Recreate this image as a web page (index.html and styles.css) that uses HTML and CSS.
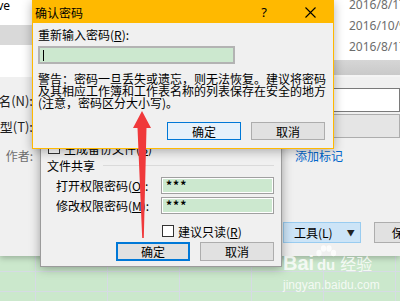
FILE: index.html
```html
<!DOCTYPE html>
<html lang="zh-CN">
<head>
    <meta charset="UTF-8">
    <title>确认密码</title>
    <link rel="stylesheet" href="styles.css">
</head>
<body>

<!-- 另存为 窗口 -->
<div class="win saveas">
    <div class="browser">
        <div class="nav">
            <div class="nav-item"><span class="cut">OneDrive</span></div>
            <div class="nav-item sel"></div>
        </div>
        <div class="files">
            <div class="list">
                <div class="date first">2016/8/17 10:21</div>
                <div class="date">2016/10/9 15:02</div>
                <div class="date">2016/8/17 10:20</div>
            </div>
            <div class="hscroll"></div>
        </div>
    </div>

    <div class="field-row name-row">
        <div class="lbl"><span>文件名(N):</span></div>
        <div class="textbox"></div>
    </div>
    <div class="field-row type-row">
        <div class="lbl"><span>保存类型(T):</span></div>
        <div class="select"></div>
    </div>
    <div class="meta-row">
        <div class="lbl muted"><span>作者:</span></div>
        <span class="link">添加标记</span>
    </div>
    <div class="action-row">
        <div class="btn tools">工具(L)<span class="caret">▼</span></div>
        <div class="btn save">保存(S)</div>
    </div>
</div>

<!-- 常规选项 -->
<div class="win general">
    <div class="check-row">
        <span class="box"></span>
        <span>生成备份文件(<u>B</u>)</span>
    </div>
    <div class="group-head">
        <span>文件共享</span>
        <span class="rule"></span>
    </div>
    <div class="pw-row">
        <span class="pw-label">打开权限密码(<u>O</u>):</span>
        <span class="pw-box">***</span>
    </div>
    <div class="pw-row second">
        <span class="pw-label">修改权限密码(<u>M</u>):</span>
        <span class="pw-box">***</span>
    </div>
    <div class="check-row readonly">
        <span class="box"></span>
        <span>建议只读(<u>R</u>)</span>
    </div>
    <div class="dlg-buttons">
        <div class="btn push default">确定</div>
        <div class="btn push">取消</div>
    </div>
</div>

<!-- 确认密码 -->
<div class="win confirm">
    <div class="titlebar">
        <span class="title">确认密码</span>
        <span class="help">?</span>
        <span class="close">
            <svg width="11" height="11" viewBox="0 0 11 11"><path d="M0.5 0.5 L10.5 10.5 M10.5 0.5 L0.5 10.5" stroke="#000" stroke-width="1.1" fill="none"/></svg>
        </span>
    </div>
    <div class="confirm-body">
        <div class="prompt">重新输入密码(<u>R</u>):</div>
        <div class="pw-input"><span class="caret-line"></span></div>
        <div class="warning">警告：密码一旦丢失或遗忘，则无法恢复。建议将密码及其相应工作簿和工作表名称的列表保存在安全的地方(注意，密码区分大小写)。</div>
        <div class="dlg-buttons confirm-buttons">
            <div class="btn push focus">确定</div>
            <div class="btn push">取消</div>
        </div>
    </div>
</div>

<svg class="arrow" width="400" height="301" viewBox="0 0 400 301">
    <polygon points="142,111 151,128 146.5,128 143.8,238 142.2,238 137.5,128 133,128" fill="#f0393b"/>
</svg>

<div class="watermark">
    <div class="wm-logo">
        <span>Bai</span>
        <span class="paw">
            <svg width="22" height="12" viewBox="0 0 22 12">
                <ellipse cx="4" cy="8" rx="2.6" ry="3.2" fill="currentColor"/>
                <ellipse cx="8.5" cy="3.5" rx="2.6" ry="3.2" fill="currentColor"/>
                <ellipse cx="14" cy="3.5" rx="2.6" ry="3.2" fill="currentColor"/>
                <ellipse cx="18.5" cy="8" rx="2.6" ry="3.2" fill="currentColor"/>
            </svg>
            <span class="du">du</span>
        </span>
        <span class="jy">经验</span>
    </div>
    <div class="wm-url">jingyan.baidu.com</div>
</div>

</body>
</html>
```

FILE: styles.css
```css
/* 桌面 + Excel 绿色表格背景 */
* { box-sizing: border-box; }
body {
    margin: 0;
    width: 400px;
    height: 301px;
    overflow: hidden;
    position: relative;
    font-family: "Noto Sans CJK SC", "Noto Sans", sans-serif;
    font-size: 12px;
    color: #000;
    background-color: #cbe8cc;
    background-image:
        linear-gradient(to right, #d6dbe4 1px, transparent 1px),
        linear-gradient(to bottom, #d6dbe4 1px, transparent 1px);
    background-size: 72px 20px;
    background-position: 35px 11px;
}
u { text-decoration: underline; }

.win {
    position: absolute;
    background: #f0f0f0;
    overflow: hidden;
}

/* 另存为 */
.saveas {
    left: 0;
    top: 0;
    width: 400px;
    height: 256px;
    box-shadow: 0 2px 6px rgba(0,0,0,0.25);
}
.browser {
    display: flex;
    justify-content: space-between;
    height: 77px;
    background: #fff;
}
.nav { width: 40px; }
.nav-item {
    height: 20px;
    display: flex;
    align-items: center;
    font-family: "Noto Sans", sans-serif;
    font-size: 12px;
}
.nav-item:first-child { margin-top: -5px; }
.nav-item .cut {
    width: 10px;
    display: flex;
    justify-content: flex-end;
    white-space: nowrap;
}
.nav-item.sel { margin-top: 10px; background: #d9d9d9; }

.files {
    width: 67px;
    background: #f4f4f4;
}
.list {
    height: 60px;
    background: #fff;
    overflow: hidden;
}
.date {
    height: 21px;
    line-height: 21px;
    padding-left: 16px;
    white-space: nowrap;
    font-family: "Noto Sans", sans-serif;
    font-size: 12px;
    color: #6d6d6d;
}
.date.first { margin-top: -6px; }
.hscroll {
    height: 15px;
    background: linear-gradient(#d6d6d6, #c9c9c9);
}

.field-row {
    display: flex;
    align-items: center;
    height: 24px;
}
.name-row { margin-top: 11px; }
.type-row { margin-top: 2px; }
.lbl {
    width: 33px;
    flex-shrink: 0;
    display: flex;
    justify-content: flex-end;
    white-space: nowrap;
    font-size: 13px;
    color: #1e1e1e;
}
.textbox {
    flex: 1;
    height: 24px;
    margin-left: 2px;
    background: #fff;
    border: 1px solid #7a7a7a;
}
.select {
    flex: 1;
    height: 24px;
    margin-left: 2px;
    background: #e5e5e5;
    border: 1px solid #adadad;
}
.meta-row {
    display: flex;
    align-items: center;
    height: 16px;
    margin-top: 9px;
}
.muted { color: #6d6d6d; font-size: 12px; }
.link {
    margin-left: 262px;
    color: #0066cc;
    font-size: 12px;
}
.action-row {
    display: flex;
    margin-top: 59px;
    height: 21px;
}
.btn {
    display: flex;
    align-items: center;
    justify-content: center;
    flex-shrink: 0;
    background: #e1e1e1;
    border: 1px solid #adadad;
    font-size: 12px;
}
.tools {
    margin-left: 283px;
    width: 78px;
    justify-content: flex-start;
    padding-left: 10px;
    background: #cce4f7;
    border-color: #99ccf0;
}
.caret {
    margin-left: 14px;
    font-size: 8px;
    color: #222;
}
.save {
    margin-left: 13px;
    width: 75px;
}

/* 常规选项 */
.general {
    left: 40px;
    top: 96px;
    width: 242px;
    height: 171px;
    border: 1px solid #9b9b9b;
    padding: 45px 7px 0 7px;
    box-shadow: 0 1px 10px rgba(0,0,0,0.35);
}
.check-row {
    display: flex;
    align-items: center;
    gap: 4px;
    height: 12px;
    white-space: nowrap;
}
.box {
    width: 12px;
    height: 12px;
    border: 1px solid #333;
    background: #fff;
}
.group-head {
    display: flex;
    align-items: center;
    height: 12px;
    margin-top: 5px;
    margin-left: -1px;
}
.rule {
    flex: 1;
    height: 1px;
    margin-left: 8px;
    background: #dadada;
}
.pw-row {
    display: flex;
    align-items: center;
    height: 17px;
    margin-top: 6px;
    padding-left: 8px;
}
.pw-row.second { margin-top: 3px; }
.pw-label {
    width: 105px;
    white-space: nowrap;
    overflow: hidden;
}
.pw-box {
    width: 113px;
    height: 17px;
    padding-left: 4px;
    line-height: 14px;
    background: #cce8cf;
    border: 1px solid #a0a0a0;
    box-shadow: inset 0 0 0 1px #fff;
    font-weight: bold;
    letter-spacing: 1px;
}
.readonly {
    margin-top: 11px;
    margin-left: 114px;
}
.dlg-buttons {
    display: flex;
    justify-content: flex-end;
    gap: 10px;
    margin-top: 5px;
}
.push {
    width: 74px;
    height: 19px;
}
.push.default { border: 2px solid #0078d7; }

/* 确认密码 */
.confirm {
    left: 32px;
    top: 0;
    width: 302px;
    height: 149px;
    border: 1px solid #ffb900;
    box-shadow: 0 2px 10px rgba(0,0,0,0.3);
}
.titlebar {
    display: flex;
    align-items: center;
    height: 22px;
    background: #ffb900;
}
.title { flex: 1; padding-left: 2px; }
.help {
    width: 30px;
    text-align: center;
    font-family: "Noto Sans", sans-serif;
    font-size: 13px;
}
.close {
    width: 46px;
    margin-left: 8px;
    display: flex;
    justify-content: center;
}
.confirm-body { padding: 6px 8px 0 5px; }
.prompt { line-height: 12px; }
.pw-input {
    position: relative;
    width: 197px;
    height: 18px;
    margin-top: 5px;
    background: #cce8cf;
    border: 2px solid #b3b3b3;
}
.caret-line {
    position: absolute;
    left: 3px;
    top: 2px;
    width: 1px;
    height: 11px;
    background: #000;
}
.warning {
    width: 290px;
    margin-top: 9px;
    line-height: 12px;
}
.confirm-buttons { margin-top: 13px; }
.confirm-buttons .push { height: 18px; }
.push.focus {
    background: #e5f1fb;
    border-color: #0078d7;
}

.arrow {
    position: absolute;
    left: 0;
    top: 0;
    pointer-events: none;
}

/* 百度经验 水印 */
.watermark {
    position: absolute;
    left: 283px;
    top: 245px;
    color: rgba(255,255,255,0.8);
}
.wm-logo {
    display: flex;
    align-items: flex-end;
    font-family: "Liberation Sans", Arial, sans-serif;
    font-weight: bold;
    font-size: 20px;
    line-height: 20px;
}
.paw {
    display: flex;
    flex-direction: column;
    align-items: center;
    width: 24px;
}
.du { font-size: 15px; line-height: 16px; }
.jy {
    margin-left: 2px;
    font-family: "Noto Sans CJK SC", sans-serif;
    font-weight: normal;
    font-size: 16px;
}
.wm-url {
    margin-top: 6px;
    font-family: "Liberation Sans", Arial, sans-serif;
    font-size: 12px;
    line-height: 12px;
}
```
